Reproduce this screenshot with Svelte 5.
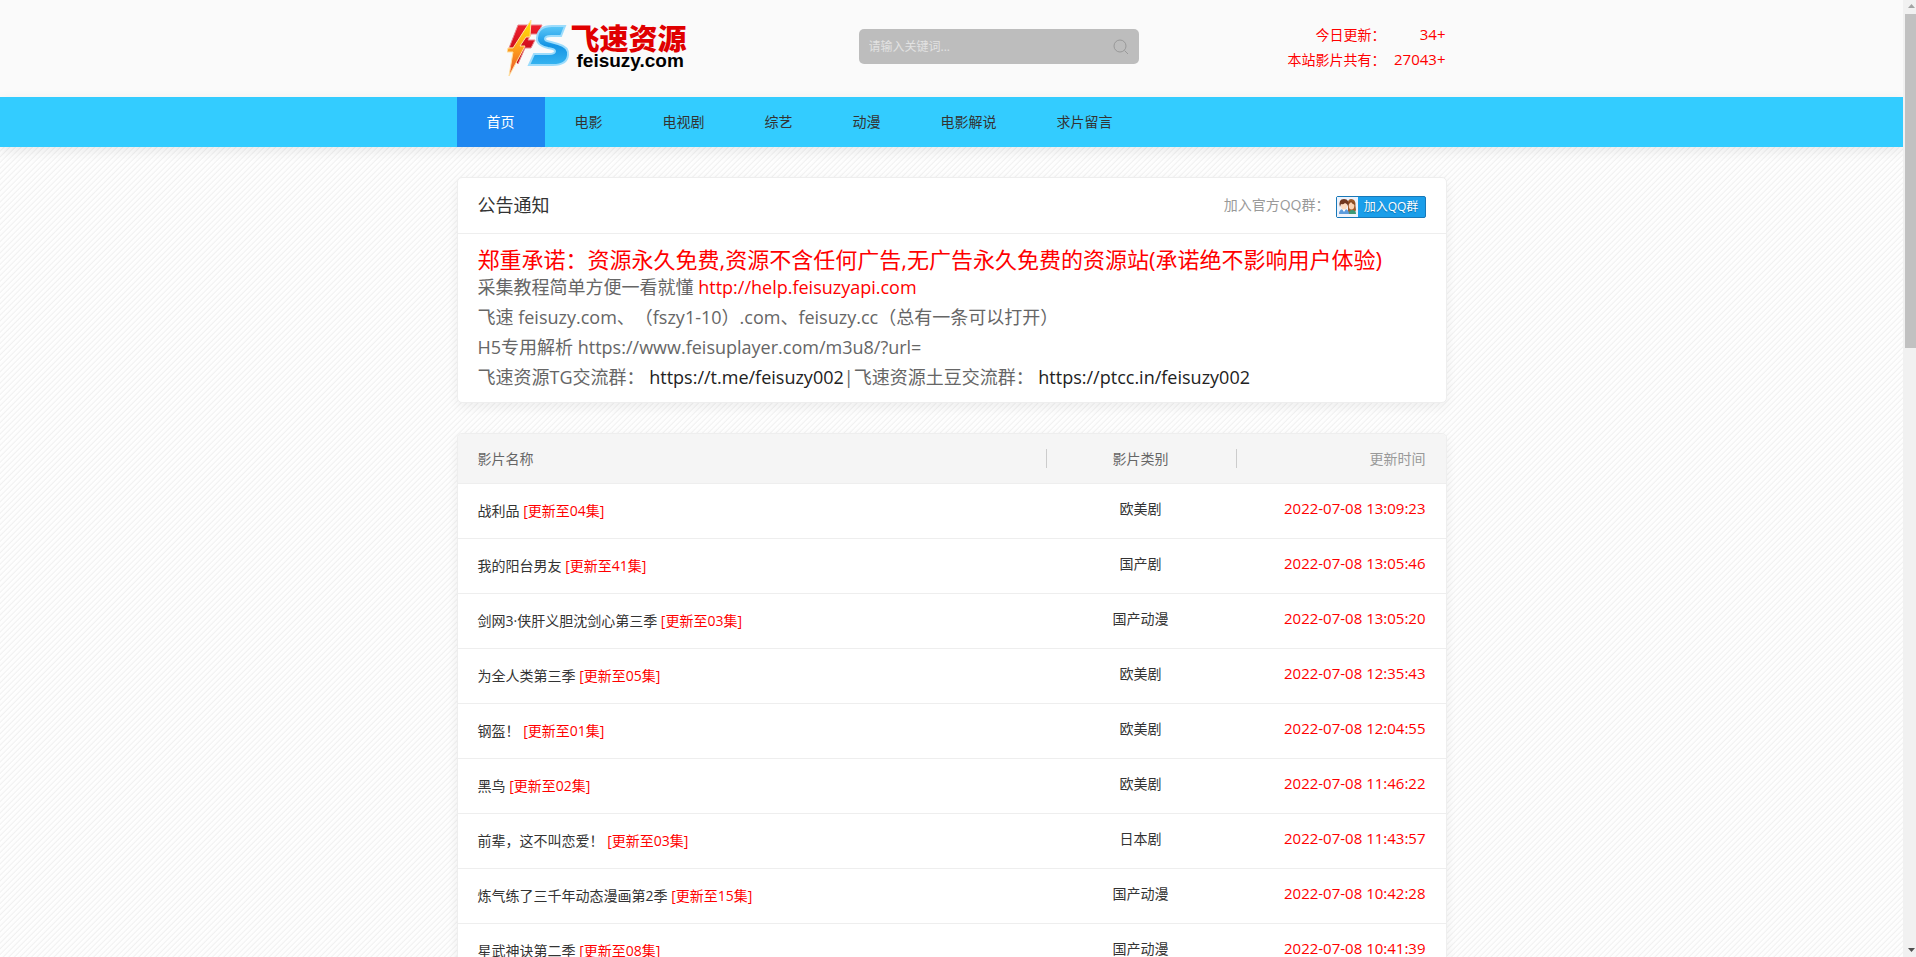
<script lang="ts">
  interface Movie {
    name: string;
    note: string;
    category: string;
    time: string;
  }

  const nav = ["首页", "电影", "电视剧", "综艺", "动漫", "电影解说", "求片留言"];

  const stats = [
    { label: "今日更新：", value: "34+" },
    { label: "本站影片共有：", value: "27043+" },
  ];

  const movies: Movie[] = [
    { name: "战利品", note: "更新至04集", category: "欧美剧", time: "2022-07-08 13:09:23" },
    { name: "我的阳台男友", note: "更新至41集", category: "国产剧", time: "2022-07-08 13:05:46" },
    { name: "剑网3·侠肝义胆沈剑心第三季", note: "更新至03集", category: "国产动漫", time: "2022-07-08 13:05:20" },
    { name: "为全人类第三季", note: "更新至05集", category: "欧美剧", time: "2022-07-08 12:35:43" },
    { name: "钢盔！", note: "更新至01集", category: "欧美剧", time: "2022-07-08 12:04:55" },
    { name: "黑鸟", note: "更新至02集", category: "欧美剧", time: "2022-07-08 11:46:22" },
    { name: "前辈，这不叫恋爱！", note: "更新至03集", category: "日本剧", time: "2022-07-08 11:43:57" },
    { name: "炼气练了三千年动态漫画第2季", note: "更新至15集", category: "国产动漫", time: "2022-07-08 10:42:28" },
    { name: "星武神诀第二季", note: "更新至08集", category: "国产动漫", time: "2022-07-08 10:41:39" },
  ];

  let active = $state("首页");
  let keyword = $state("");
</script>

<div class="shell">
  <div class="page">
    <header class="header">
      <div class="wrap header-inner">
        <a class="logo" href="/" aria-label="飞速资源 feisuzy.com">
          <svg class="logo-mark" width="64" height="58" viewBox="0 0 64 58" aria-hidden="true">
            <defs>
              <linearGradient id="red" x1="0" y1="0" x2="0" y2="1">
                <stop offset="0" stop-color="#f0202c" />
                <stop offset="1" stop-color="#b80012" />
              </linearGradient>
              <linearGradient id="blue" x1="0" y1="0" x2="0" y2="1">
                <stop offset="0" stop-color="#5cc8f8" />
                <stop offset="0.5" stop-color="#1494e4" />
                <stop offset="1" stop-color="#36b4f0" />
              </linearGradient>
              <linearGradient id="bolt" x1="0" y1="0" x2="0" y2="1">
                <stop offset="0" stop-color="#ffe800" />
                <stop offset="0.5" stop-color="#ffa21c" />
                <stop offset="1" stop-color="#e8502c" />
              </linearGradient>
            </defs>
            <path d="M11 5H35L31 14H24L21 20H28L24 28H18L11 44L7 40L13 28H2Z" fill="url(#red)" stroke="#e88890" />
            <path
              d="M58 6L54 16H44Q38 16 38 19Q38 21 44 22L51 24Q62 27 61 35Q60 45 46 45H22L27 34H42Q48 34 48 31Q48 29 41 28Q29 25 30 18Q31 6 45 6Z"
              fill="url(#blue)"
              stroke="#9cdcfc"
              stroke-width="2"
            />
            <path d="M24 0L6 28H1L0 32H6L2 56L18 26H13L19 17H23Z" fill="url(#bolt)" stroke="#ffe0a0" />
          </svg>
          <span class="logo-text">
            <span class="logo-name">飞速资源</span>
            <span class="logo-domain">feisuzy.com</span>
          </span>
        </a>

        <form class="search" onsubmit={(e) => e.preventDefault()}>
          <input type="text" aria-label="搜索" placeholder="请输入关键词..." bind:value={keyword} />
          <button type="submit" aria-label="搜索">
            <svg width="16" height="16" viewBox="0 0 16 16" fill="none" stroke="#999">
              <circle cx="7" cy="7" r="6" />
              <path d="M11.5 11.5L15 15" />
            </svg>
          </button>
        </form>

        <dl class="stats">
          {#each stats as stat}
            <div>
              <dt>{stat.label}</dt>
              <dd>{stat.value}</dd>
            </div>
          {/each}
        </dl>
      </div>
    </header>

    <nav class="nav">
      <div class="wrap nav-inner">
        {#each nav as item}
          <a href="#{item}" class:active={active === item} onclick={() => (active = item)}>{item}</a>
        {/each}
      </div>
    </nav>

    <main class="wrap">
      <section class="card">
        <div class="card-head">
          <h2>公告通知</h2>
          <div class="qq">
            <span>加入官方QQ群：</span>
            <a class="qq-btn" href="#qq">
              <svg width="21" height="20" viewBox="0 0 21 20" aria-hidden="true">
                <rect width="21" height="20" fill="#eef3fc" />
                <path d="M11 17V9Q10 2 14 2Q19 2 18.500 9L19 13L17 17Z" fill="#a05a28" />
                <path d="M12 17Q12 13 15 13Q19 13 19 17Z" fill="#3c9a78" />
                <ellipse cx="14.500" cy="8.500" rx="2.800" ry="4" fill="#fbd3b4" />
                <path d="M11 7Q12 3 15 4Q18 5 18 8Q15 7 14 5Q13 7 11 7Z" fill="#8a4a20" />
                <path d="M2 17Q2 12 7 12Q12 12 12 17Z" fill="#5b9bdc" />
                <path d="M5 12L7 15L9 12Z" fill="#fff" />
                <ellipse cx="7" cy="8.500" rx="3" ry="4" fill="#fcdcc0" />
                <path d="M3 10Q1 2 7 2Q13 2 11 10Q11 7 8 6Q6 8 4 7Z" fill="#703820" />
              </svg>
              <span>加入QQ群</span>
            </a>
          </div>
        </div>
        <div class="notice">
          <p class="promise">郑重承诺：资源永久免费,资源不含任何广告,无广告永久免费的资源站(承诺绝不影响用户体验)</p>
          <p>采集教程简单方便一看就懂 <a class="red" href="http://help.feisuzyapi.com">http://help.feisuzyapi.com</a></p>
          <p>飞速 feisuzy.com、（fszy1-10）.com、feisuzy.cc（总有一条可以打开）</p>
          <p>H5专用解析 https://www.feisuplayer.com/m3u8/?url=</p>
          <p>
            飞速资源TG交流群： <a href="https://t.me/feisuzy002">https://t.me/feisuzy002</a>|飞速资源土豆交流群：
            <a href="https://ptcc.in/feisuzy002">https://ptcc.in/feisuzy002</a>
          </p>
        </div>
      </section>

      <section class="card">
        <table>
          <thead>
            <tr>
              <th class="name">影片名称</th>
              <th class="category">影片类别</th>
              <th class="time">更新时间</th>
            </tr>
          </thead>
          <tbody>
            {#each movies as movie}
              <tr>
                <td class="name"><a href="#{movie.name}">{movie.name} <span class="red">[{movie.note}]</span></a></td>
                <td class="category">{movie.category}</td>
                <td class="time">{movie.time}</td>
              </tr>
            {/each}
          </tbody>
        </table>
      </section>
    </main>
  </div>

  <div class="scrollbar" aria-hidden="true">
    <svg width="7" height="4" viewBox="0 0 7 4"><path d="M0 4L3.500 0L7 4Z" fill="#a3a3a3" /></svg>
    <div class="track"><div class="thumb"></div></div>
    <svg width="7" height="4" viewBox="0 0 7 4"><path d="M0 0L3.500 4L7 0Z" fill="#505050" /></svg>
  </div>
</div>

<style>
  :global(body) {
    margin: 0;
  }

  .shell {
    display: flex;
    height: 100vh;
    font-family: "Open Sans", "Noto Sans CJK SC", sans-serif;
    font-size: 14px;
    color: #333;
    text-spacing-trim: space-all;
  }

  .page {
    flex: 1;
    min-width: 0;
    overflow-y: auto;
    scrollbar-width: none;
    background: repeating-linear-gradient(135deg, #fff 0, #fcfcfc 2px, #f1f1f1 3px, #fff 4px);
  }

  .wrap {
    width: 100%;
    max-width: 990px;
    margin: 0 auto;
    box-sizing: border-box;
  }

  a { color: inherit; text-decoration: none; }
  .red, .notice a.red { color: #f00; }

  .header { background: #fafafa; }

  .header-inner {
    display: grid;
    grid-template-columns: 402px 280px 1fr;
    align-items: start;
    height: 97px;
  }

  .logo {
    display: flex;
    padding: 20px 0 0 50px;
  }

  .logo-text {
    display: flex;
    flex-direction: column;
    padding-top: 2px;
    white-space: nowrap;
  }

  .logo-name {
    font-family: "Noto Sans CJK SC", sans-serif;
    font-size: 29px;
    font-weight: 900;
    line-height: 30px;
    color: #e00000;
  }

  .logo-domain {
    padding-left: 6px;
    font-family: "Liberation Sans", sans-serif;
    font-size: 19px;
    font-weight: 700;
    line-height: 18px;
    color: #000;
  }

  .search {
    display: flex;
    align-items: center;
    height: 35px;
    margin-top: 29px;
    border-radius: 5px;
    background: #bdbdbd;
  }

  .search input {
    flex: 1;
    min-width: 0;
    padding: 0 10px;
    border: 0;
    outline: 0;
    background: none;
    font-family: inherit;
    font-size: 12px;
    color: #fff;
  }

  .search input::placeholder { color: #e2e2e2; }

  .search button {
    display: flex;
    padding: 0 10px;
    border: 0;
    background: none;
    cursor: pointer;
  }

  .stats {
    margin: 22px 0 0;
    padding-right: 1px;
    color: #f00;
    line-height: 25px;
  }

  .stats div { display: flex; justify-content: flex-end; }
  .stats dd { width: 60px; margin: 0; font-size: 15px; text-align: right; }

  .nav {
    background: #3cf;
    box-shadow: 0 4px 12px rgba(0, 0, 0, 0.08);
  }

  .nav-inner { display: flex; }

  .nav a {
    padding: 0 30px;
    line-height: 50px;
  }

  .nav a.active { background: #1e87f0; color: #fff; }

  .card {
    margin-top: 30px;
    border: 1px solid #eee;
    border-radius: 5px;
    background: #fff;
    box-shadow: 0 4px 12px rgba(0, 0, 0, 0.06);
    overflow: hidden;
  }

  .card-head {
    display: flex;
    justify-content: space-between;
    height: 55px;
    padding: 0 20px;
    border-bottom: 1px solid #eee;
    line-height: 54px;
  }

  h2 { margin: 0; font-size: 18px; font-weight: 400; }

  .qq { display: flex; gap: 6px; color: #999; }

  .qq-btn {
    display: flex;
    align-items: center;
    width: 90px;
    height: 22px;
    margin-top: 18px;
    box-sizing: border-box;
    border: 1px solid #1878b8;
    border-radius: 2px;
    background: #1a9eea;
    color: #fff;
    font-size: 12px;
    line-height: 20px;
    text-shadow: 0 1px 1px #0b6fae;
    white-space: nowrap;
  }

  .qq-btn span { flex: 1; text-align: center; }

  .notice {
    padding: 12px 20px 10px;
    font-size: 18px;
    line-height: 30px;
    color: #666;
  }

  .notice p { margin: 0; }
  .notice a { color: #222; }

  .notice .promise {
    font-size: 22px;
    line-height: 26px;
    color: #f00;
  }

  table {
    width: 100%;
    table-layout: fixed;
    border-collapse: collapse;
  }

  th, td {
    padding: 0 20px;
    border-bottom: 1px solid #eee;
    font-weight: 400;
    vertical-align: top;
    line-height: 50px;
  }

  th { height: 49px; line-height: 49px; background-color: #f5f5f5; color: #666; }
  td { height: 54px; }

  .name { text-align: left; }
  td.name { line-height: 54px; }
  .category { width: 150px; text-align: center; }
  .time { width: 170px; text-align: right; }
  th.time { color: #999; }
  td.time { font-size: 15px; line-height: 48px; color: #f00; }

  th.category, th.time {
    background-image: linear-gradient(#ccc, #ccc);
    background-position: left center;
    background-size: 1px 19px;
    background-repeat: no-repeat;
  }

  .scrollbar {
    display: flex;
    flex-direction: column;
    align-items: center;
    width: 13px;
    padding: 4px 0 5px;
    box-sizing: border-box;
    background: #f1f1f1;
  }

  .scrollbar svg { margin-left: 4px; }

  .track {
    flex: 1;
    width: 11px;
    margin: 6px 0 6px 2px;
  }

  .thumb { height: 36%; background: #c1c1c1; }
</style>
